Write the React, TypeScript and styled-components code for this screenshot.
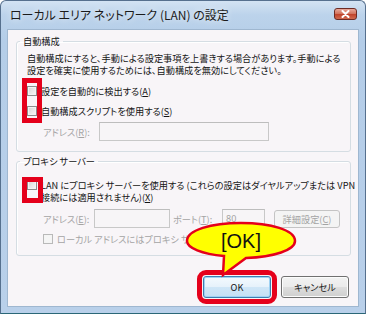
import React from 'react';
import styled, { createGlobalStyle } from 'styled-components';

const GlobalStyle = createGlobalStyle`
  html, body { margin: 0; padding: 0; width: 366px; height: 314px; overflow: hidden; background: #ffffff; }
  body { font-family: "Noto Sans CJK JP", "Noto Sans", sans-serif; }
  * { box-sizing: border-box; }
`;

const RED = '#e5001b';
const FS = '9.2px';

const Window = styled.div`
  position: relative;
  width: 366px;
  height: 314px;
  display: flex;
  flex-direction: column;
  background: linear-gradient(180deg, #d3e3f3 0px, #bcd3eb 14px, #b4cde8 40px, #b9d0ea 100%);
  border: 1px solid #56708e;
  border-bottom-color: #2a6777;
  border-radius: 6px 6px 0 0;
`;

const TitleBar = styled.div`
  height: 28px;
  flex: none;
  display: flex;
  align-items: center;
  justify-content: space-between;
  padding: 0 8px 0 9px;
`;

const Title = styled.span`
  font-size: 12px;
  line-height: 14px;
  color: #1b1b1b;
  font-feature-settings: "palt" 1;
  text-shadow: 0 0 6px rgba(255, 255, 255, 0.95);
`;

const CloseButton = styled.div`
  align-self: flex-start;
  margin-top: 7px;
  width: 23px;
  height: 12px;
  border: 1px solid #6d2b24;
  border-radius: 3px;
  background: linear-gradient(180deg, #e9a99b 0%, #d2755f 45%, #c1442c 55%, #cf6a4f 100%);
  display: flex;
  align-items: center;
  justify-content: center;
`;

const Content = styled.div`
  flex: 1;
  margin: 0 6px 6px 6px;
  border: 1px solid #9fb7d0;
  background: #f8f5f8;
  display: flex;
  flex-direction: column;
  padding: 5px 7px 8px 8px;
`;

const Group = styled.fieldset<{ $gap?: number }>`
  margin: 0 0 ${(p) => p.$gap ?? 0}px 0;
  padding: 0;
  min-width: 0;
  border: 1px solid #d5dde3;
  border-radius: 3px;
  box-shadow: inset 1px 1px 0 #ffffff;
`;

const Legend = styled.legend`
  margin-left: 3px;
  padding: 0 3px;
  font-size: ${FS};
  line-height: 12px;
  color: #141414;
  font-feature-settings: "palt" 1;
`;

const GroupBody = styled.div<{ $pad: string }>`
  display: flex;
  flex-direction: column;
  padding: ${(p) => p.$pad};
`;

const Text = styled.div<{ $disabled?: boolean }>`
  font-size: ${FS};
  line-height: 12px;
  color: ${(p) => (p.$disabled ? '#a4a4a4' : '#141414')};
  font-feature-settings: "palt" 1;
  white-space: nowrap;
`;

const CheckRow = styled.div<{ $mt: number; $indent?: number }>`
  display: flex;
  align-items: flex-start;
  gap: 4px;
  margin-top: ${(p) => p.$mt}px;
  padding-left: ${(p) => p.$indent ?? 0}px;
`;

const Box = styled.span<{ $disabled?: boolean }>`
  flex: none;
  width: 10px;
  height: 10px;
  margin-top: 1px;
  border: 1px solid ${(p) => (p.$disabled ? '#b9b9b9' : '#8c8c8c')};
  background: ${(p) =>
    p.$disabled
      ? '#f5f5f5'
      : 'linear-gradient(135deg, #d2d2d2 0%, #e8e8e8 50%, #f8f8f8 100%)'};
  box-shadow: inset 0 0 0 1px #f4f4f4;
`;

const U = styled.span`
  text-decoration: underline;
`;

const FieldRow = styled.div<{ $mt: number }>`
  display: flex;
  align-items: center;
  margin-top: ${(p) => p.$mt}px;
  padding-left: 16px;
`;

const FieldLabel = styled(Text)<{ $w: number; $pl?: number }>`
  width: ${(p) => p.$w}px;
  padding-left: ${(p) => p.$pl ?? 0}px;
  flex: none;
`;

const Input = styled.div<{ $w: number; $h: number }>`
  width: ${(p) => p.$w}px;
  height: ${(p) => p.$h}px;
  flex: none;
  border: 1px solid #c8c8c8;
  border-top-color: #bdbdbd;
  background: #f7f5f7;
  font-size: 9px;
  line-height: ${(p) => p.$h - 2}px;
  color: #a4a4a4;
  padding-left: 3px;
  font-family: "Noto Sans", sans-serif;
`;

const SmallButton = styled.div`
  margin-left: 9px;
  width: 68px;
  height: 18px;
  border: 1px solid #c4c4c4;
  border-radius: 3px;
  background: #f4f4f4;
  font-size: ${FS};
  line-height: 16px;
  text-align: center;
  color: #a4a4a4;
  font-feature-settings: "palt" 1;
`;

const ButtonRow = styled.div`
  margin-top: auto;
  display: flex;
  justify-content: flex-end;
  gap: 10px;
  padding-right: 2px;
`;

const DialogButton = styled.div<{ $default?: boolean }>`
  width: 68px;
  height: 22px;
  border: 1px solid ${(p) => (p.$default ? '#3c7fb1' : '#707070')};
  border-radius: 3px;
  background: ${(p) =>
    p.$default
      ? 'linear-gradient(180deg, #f4fafe 0%, #e6f2fb 48%, #cfe6f7 52%, #c4e0f5 100%)'
      : 'linear-gradient(180deg, #f2f2f2 0%, #ebebeb 48%, #dddddd 52%, #cfcfcf 100%)'};
  box-shadow: inset 0 0 0 1px ${(p) => (p.$default ? '#9fd2f3' : '#fcfcfc')};
  font-size: ${FS};
  line-height: 20px;
  text-align: center;
  color: #141414;
  font-feature-settings: "palt" 1;
  outline: ${(p) => (p.$default ? `5px solid ${RED}` : 'none')};
  outline-offset: 1px;
`;

const Highlight = styled.div<{ $x: number; $y: number; $w: number; $h: number }>`
  position: absolute;
  left: ${(p) => p.$x}px;
  top: ${(p) => p.$y}px;
  width: ${(p) => p.$w}px;
  height: ${(p) => p.$h}px;
  border: 5px solid ${RED};
  pointer-events: none;
`;

const Callout = styled.svg`
  position: absolute;
  left: 183px;
  top: 219px;
  width: 116px;
  height: 60px;
  overflow: visible;
`;

export default function App() {
  return (
    <>
      <GlobalStyle />
      <Window>
        <TitleBar>
          <Title>ローカル エリア ネットワーク (LAN) の設定</Title>
          <CloseButton>
            <svg width="9" height="8" viewBox="0 0 9 8">
              <path d="M1.5 1 L7.5 7 M7.5 1 L1.5 7" stroke="#ffffff" strokeWidth="2" strokeLinecap="round" />
            </svg>
          </CloseButton>
        </TitleBar>
        <Content>
          <Group $gap={3}>
            <Legend>自動構成</Legend>
            <GroupBody $pad="5px 10px 10px 10px">
              <Text>自動構成にすると、手動による設定事項を上書きする場合があります。手動による</Text>
              <Text>設定を確実に使用するためには、自動構成を無効にしてください。</Text>
              <CheckRow $mt={9}>
                <Box />
                <Text>
                  設定を自動的に検出する(<U>A</U>)
                </Text>
              </CheckRow>
              <CheckRow $mt={8}>
                <Box />
                <Text>
                  自動構成スクリプトを使用する(<U>S</U>)
                </Text>
              </CheckRow>
              <FieldRow $mt={5}>
                <FieldLabel $w={56} $disabled>
                  アドレス(<U>R</U>):
                </FieldLabel>
                <Input $w={170} $h={19} />
              </FieldRow>
            </GroupBody>
          </Group>
          <Group>
            <Legend>プロキシ サーバー</Legend>
            <GroupBody $pad="12px 10px 10px 10px">
              <CheckRow $mt={0}>
                <Box />
                <div>
                  <Text>LAN にプロキシ サーバーを使用する (これらの設定はダイヤルアップまたは VPN</Text>
                  <Text>
                    接続には適用されません)(<U>X</U>)
                  </Text>
                </div>
              </CheckRow>
              <FieldRow $mt={6}>
                <FieldLabel $w={51} $disabled>
                  アドレス(<U>E</U>):
                </FieldLabel>
                <Input $w={76} $h={19} />
                <FieldLabel $w={52} $pl={3} $disabled>
                  ポート(<U>T</U>):
                </FieldLabel>
                <Input $w={43} $h={19}>80</Input>
                <SmallButton>
                  詳細設定(<U>C</U>)
                </SmallButton>
              </FieldRow>
              <CheckRow $mt={5} $indent={16}>
                <Box $disabled />
                <Text $disabled>
                  ローカル アドレスにはプロキシ サーバーを使用しない(<U>B</U>)
                </Text>
              </CheckRow>
            </GroupBody>
          </Group>
          <ButtonRow>
            <DialogButton $default>OK</DialogButton>
            <DialogButton>キャンセル</DialogButton>
          </ButtonRow>
        </Content>
        <Highlight $x={21} $y={77} $w={20} $h={45} />
        <Highlight $x={21} $y={176} $w={21} $h={26} />
        <Callout viewBox="0 0 116 60">
          <path
            d="M 40 36 C 18 34 3 28 3 21 C 3 10 27 3 57 3 C 87 3 111 10 111 21 C 111 30 90 37 62 38 L 39 55 Z"
            fill="#ffff00"
            stroke={RED}
            strokeWidth="2.5"
            strokeLinejoin="miter"
          />
          <text
            x="57"
            y="28"
            textAnchor="middle"
            fontFamily="'Liberation Sans', Arial, sans-serif"
            fontSize="20"
            fill="#111111"
          >
            [OK]
          </text>
        </Callout>
      </Window>
    </>
  );
}
